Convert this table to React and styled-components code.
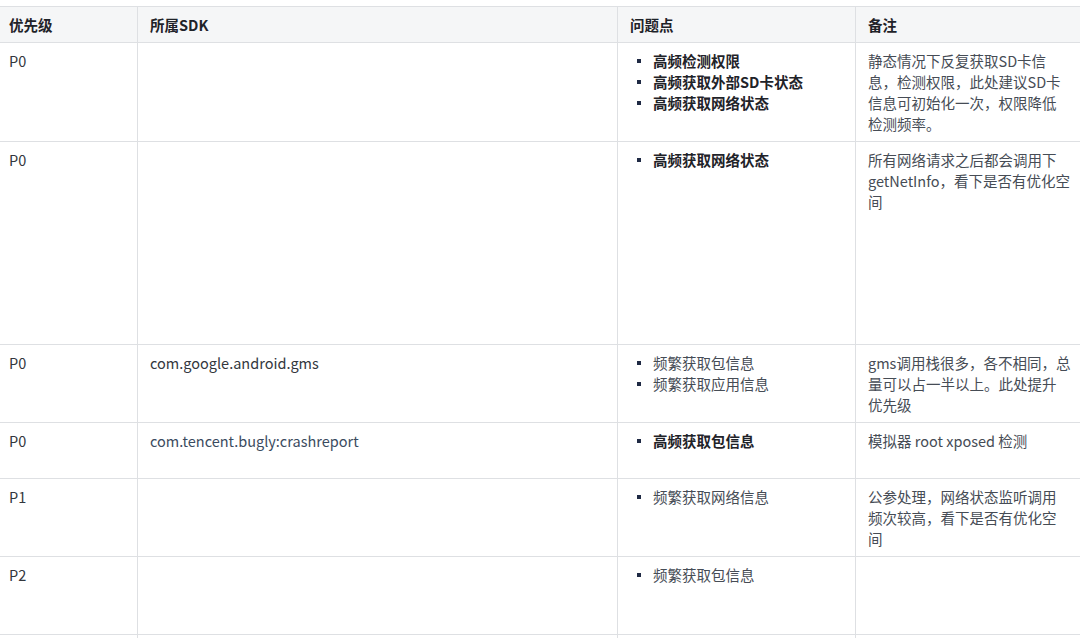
import styled, { createGlobalStyle } from 'styled-components';

const GlobalStyle = createGlobalStyle`
  html, body {
    margin: 0;
    padding: 0;
    background: #fff;
    overflow: hidden;
  }
  body {
    font-family: "Noto Sans CJK SC", "Noto Sans", sans-serif;
    font-size: 14.5px;
    color: #1f2329;
  }
`;

// notes are kept as the lines they wrap into in the source table
const rows = [
  {
    level: 'P0',
    sdk: '',
    height: 99,
    bold: true,
    issues: ['高频检测权限', '高频获取外部SD卡状态', '高频获取网络状态'],
    note: ['静态情况下反复获取SD卡信', '息，检测权限，此处建议SD卡', '信息可初始化一次，权限降低', '检测频率。'],
  },
  {
    level: 'P0',
    sdk: '',
    height: 203,
    bold: true,
    issues: ['高频获取网络状态'],
    note: ['所有网络请求之后都会调用下', 'getNetInfo，看下是否有优化空', '间'],
  },
  {
    level: 'P0',
    sdk: 'com.google.android.gms',
    height: 78,
    bold: false,
    issues: ['频繁获取包信息', '频繁获取应用信息'],
    note: ['gms调用栈很多，各不相同，总', '量可以占一半以上。此处提升', '优先级'],
  },
  {
    level: 'P0',
    sdk: 'com.tencent.bugly:crashreport',
    link: true,
    height: 56,
    bold: true,
    issues: ['高频获取包信息'],
    note: ['模拟器 root xposed 检测'],
  },
  {
    level: 'P1',
    sdk: '',
    height: 78,
    bold: false,
    issues: ['频繁获取网络信息'],
    note: ['公参处理，网络状态监听调用', '频次较高，看下是否有优化空', '间'],
  },
  {
    level: 'P2',
    sdk: '',
    height: 78,
    bold: false,
    issues: ['频繁获取包信息'],
    note: [],
  },
];

export default function App() {
  return (
    <Page>
      <GlobalStyle />
      <Table>
        <colgroup>
          <col style={{ width: 141 }} />
          <col style={{ width: 480 }} />
          <col style={{ width: 238 }} />
          <col style={{ width: 227 }} />
        </colgroup>
        <thead>
          <tr>
            <HeadCell>优先级</HeadCell>
            <HeadCell>所属SDK</HeadCell>
            <HeadCell>问题点</HeadCell>
            <HeadCell>备注</HeadCell>
          </tr>
        </thead>
        <tbody>
          {rows.map((r, i) => (
            <BodyRow key={i} $h={r.height}>
              <Cell>{r.level}</Cell>
              <Cell $link={r.link}>{r.sdk}</Cell>
              <Cell>
                <IssueList>
                  {r.issues.map((t) => (
                    <Issue key={t} $bold={r.bold}>{t}</Issue>
                  ))}
                </IssueList>
              </Cell>
              <Cell $muted>
                {r.note.map((line) => (
                  <NoteLine key={line}>{line}</NoteLine>
                ))}
              </Cell>
            </BodyRow>
          ))}
          <BodyRow $h={8}>
            <Cell />
            <Cell />
            <Cell />
            <Cell />
          </BodyRow>
        </tbody>
      </Table>
    </Page>
  );
}

const Page = styled.div`
  padding-top: 6px;
  margin-left: -4px;
  width: 1090px;
`;

const Table = styled.table`
  table-layout: fixed;
  border-collapse: collapse;
  width: 1086px;
`;

const HeadCell = styled.th`
  height: 36px;
  padding: 0 12px;
  box-sizing: border-box;
  background: #f5f6f7;
  border: 1px solid #dee0e3;
  text-align: left;
  font-weight: 700;
  font-size: 14.5px;
  color: #1f2329;
`;

const BodyRow = styled.tr`
  height: ${(p) => p.$h}px;
`;

const Cell = styled.td`
  vertical-align: top;
  padding: 7px 12px;
  box-sizing: border-box;
  border: 1px solid #dee0e3;
  line-height: 21px;
  font-size: 14.5px;
  color: ${(p) => (p.$link ? '#3b4b60' : p.$muted ? '#464c55' : '#33373d')};
  white-space: nowrap;
  overflow: hidden;
`;

const NoteLine = styled.div`
  white-space: nowrap;
`;

const IssueList = styled.ul`
  list-style: none;
  margin: 0;
  padding: 0 0 0 11px;
`;

const Issue = styled.li`
  position: relative;
  padding-left: 12px;
  font-weight: ${(p) => (p.$bold ? 700 : 400)};
  color: ${(p) => (p.$bold ? '#1f2329' : '#464c55')};
  &::before {
    content: '';
    position: absolute;
    left: -4px;
    top: 9px;
    width: 4px;
    height: 4px;
    background: #1f2a44;
  }
`;
